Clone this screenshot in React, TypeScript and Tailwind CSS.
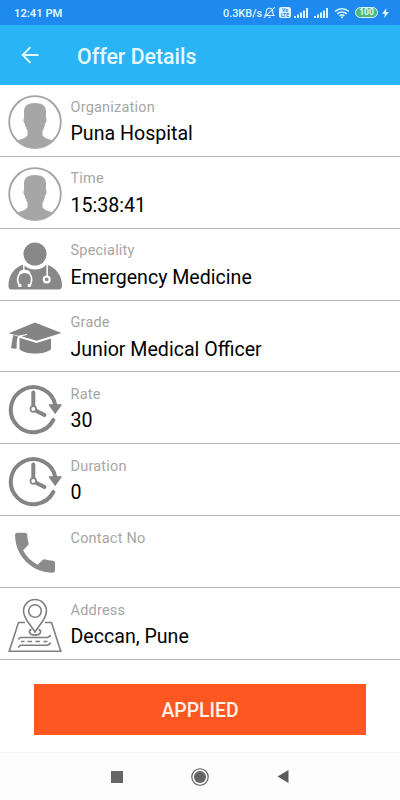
import React from 'react';

const AvatarIcon: React.FC = () => (
    <svg className="w-[54px] h-[54px]" viewBox="0 0 54 54" fill="none">
        <circle cx="27" cy="27" r="25.800" stroke="#a2a2a2" strokeWidth="1.800"/>
        <path
            d="M27 8c7.500 0 11.300 2.800 11 9.500l-.1 5.500c1.100.8.800 4.300-.8 5.800-.6 3.700-1.600 5.600-2.600 6.800v4.200c1.200 3.500 6.600 4.300 11 6.200A26 26 0 0 1 27 53.500 26 26 0 0 1 8.500 46c4.400-1.900 9.800-2.700 11-6.200v-4.200c-1-1.200-2-3.100-2.600-6.800-1.600-1.500-1.900-5-.8-5.800L16 17.500C15.700 10.800 19.500 8 27 8Z"
            fill="#a6a6a6"
        />
    </svg>
);

const DoctorIcon: React.FC = () => (
    <svg className="w-[54px] h-[54px]" viewBox="0 0 54 54" fill="none">
        <circle cx="27" cy="15" r="11.500" fill="#888"/>
        <path
            d="M15.500 25.500c3 3.300 7 5 11.500 5s8.500-1.700 11.500-5C47.500 28 54 36.500 54 46.500c0 2.800-1 4-3.500 4h-47C1 50.500 .5 49.300 .5 46.500 .5 36.500 6.500 28 15.500 25.500Z"
            fill="#888"
        />
        <g stroke="#fff" strokeWidth="1.500">
            <path d="M15.800 24v8M39.200 24v13"/>
            <circle cx="38.700" cy="40.400" r="2.900" strokeWidth="2.200"/>
            <path d="M12.500 46.500h-1.300c-2-4-2-8.500.3-11.500 2.200-2.600 8.100-2.600 10.300 0 2.300 3 2.300 7.500.3 11.500h-1.300" strokeWidth="1.700"/>
            <path d="M12 34.200c1-3 8.300-3 9.300 0" strokeWidth="2.400"/>
            <path d="M10.600 46.500h2.800M19.800 46.500h2.800" strokeWidth="3.200"/>
        </g>
    </svg>
);

const GraduationIcon: React.FC = () => (
    <svg className="w-[54px] h-[54px]" viewBox="0 0 54 54" fill="#848484">
        <path d="M27 11.500 53.500 22 28.500 29.800 13.500 25.200 19 23.900l-.3-.8-8.300 1.700L.8 22.200Z"/>
        <path d="M11.500 26.700 28.500 31.900 43 27.500v10.800c-5.500 5.700-26 5.700-31.500 0Z"/>
        <path d="M5.300 24 10 25.500C8.300 29 8.900 33.500 8.600 37.600c-2 .4-3.800 0-5.600-.6C3.800 32.500 4.300 28 5.300 24Z"/>
    </svg>
);

const ClockIcon: React.FC = () => (
    <svg className="w-[54px] h-[54px]" viewBox="0 0 54 54" fill="none">
        <g stroke="#848484" strokeWidth="4" strokeLinecap="round">
            <path d="M47.500 24A22.500 22.500 0 1 0 45.300 38"/>
            <path d="M25.300 10.500v14M28 28.700l8.400 4.400"/>
        </g>
        <path d="M41.300 22.800h11.800l-5.900 8.400Z" fill="#848484" stroke="#848484" strokeWidth="1.200" strokeLinejoin="round"/>
        <circle cx="25.300" cy="27" r="2.800" fill="#fff" stroke="#848484" strokeWidth="1.700"/>
    </svg>
);

const PhoneIcon: React.FC = () => (
    <svg className="w-[54px] h-[54px]" viewBox="0 0 54 54" fill="#8b8b8b">
        <path
            transform="translate(.4 .2) scale(2.220)"
            d="M6.620 10.790c1.440 2.830 3.760 5.140 6.590 6.590l2.200-2.200c.27-.27.67-.36 1.020-.24 1.120.37 2.330.57 3.570.57.55 0 1 .45 1 1V20c0 .55-.45 1-1 1-9.390 0-17-7.610-17-17 0-.55.45-1 1-1h3.500c.55 0 1 .45 1 1 0 1.250.2 2.450.57 3.570.11.35.03.74-.25 1.020l-2.200 2.200z"
        />
    </svg>
);

const MapIcon: React.FC = () => (
    <svg className="w-[54px] h-[54px]" viewBox="0 0 54 54" fill="none" stroke="#7f7f7f" strokeWidth="1.600">
        <path d="M17 24.500h-6.500L1.200 53.200h51.600L43.500 24.500H37"/>
        <path d="M23.500 31.200c-3.300 1.300-3 5.900 3.500 5.900s6.800-4.600 3.500-5.900"/>
        <path
            d="M27 34C23.500 28 15.500 21 15.500 13a11.500 11.500 0 0 1 23 0c0 8-8 15-11.500 21Z"
            fill="#fff"
        />
        <circle cx="27" cy="13" r="6.300"/>
        <path d="M10.300 41.300l2-1.800h27.500l3-2.200M10.300 49.600l2-2.400h27.500l3-2.400"/>
        <path d="M13 43.500h3.500M19.500 43.500H24M27.500 43.500H32M35.500 43.500h4"/>
    </svg>
);

const details = [
    { label: 'Organization', value: 'Puna Hospital', Icon: AvatarIcon },
    { label: 'Time', value: '15:38:41', Icon: AvatarIcon },
    { label: 'Speciality', value: 'Emergency Medicine', Icon: DoctorIcon },
    { label: 'Grade', value: 'Junior Medical Officer', Icon: GraduationIcon },
    { label: 'Rate', value: '30', Icon: ClockIcon },
    { label: 'Duration', value: '0', Icon: ClockIcon },
    { label: 'Contact No', value: '', Icon: PhoneIcon },
    { label: 'Address', value: 'Deccan, Pune', Icon: MapIcon },
];

const SignalIcon: React.FC = () => (
    <svg className="w-[15px] h-[12px]" viewBox="0 0 15 12" fill="#d9f3ff">
        <path d="M0 9h2v2H0zM3 7.500h2V11H3zM6 5.500h2V11H6zM9 3.500h2V11H9zM12 1h2v10h-2z"/>
    </svg>
);

const StatusBar: React.FC = () => (
    <div className="h-[25px] bg-[#1e8af0] flex items-center pl-[14px] pr-[11px] text-[#e2f6ff]">
        <span className="text-[11.200px] font-semibold flex-1 pt-[3px]">12:41 PM</span>
        <span className="text-[10.900px] font-medium pt-[3px]">0.3KB/s</span>
        {/* Muted bell */}
        <svg className="w-[13px] h-[13px] ml-[1px]" viewBox="0 0 13 13" fill="none" stroke="#d9f3ff" strokeWidth="1.100">
            <path d="M2 9.500h9L9.800 7.700V5.500a3.300 3.300 0 0 0-6.600 0v2.200ZM5.300 11.300h2.400M.8 11.800 12 1.200"/>
        </svg>
        <span className="ml-[3px] w-[12px] h-[11px] rounded-[2px] bg-[#dff5ff] text-[#1e8af0] text-[5px] leading-[5px] font-bold flex flex-col items-center justify-center">
            <span>Vo</span>
            <span>LTE</span>
        </span>
        <div className="ml-[3px] flex gap-[5px]">
            <SignalIcon/>
            <SignalIcon/>
        </div>
        <svg className="w-[16px] h-[12px] ml-[5px]" viewBox="0 0 16 12" fill="none" stroke="#d9f3ff" strokeWidth="1.500">
            <path d="M1 4.500a10 10 0 0 1 14 0M3.300 6.900a6.700 6.700 0 0 1 9.400 0M5.600 9a3.500 3.500 0 0 1 4.800 0"/>
            <path d="M8 9.600v1.600" strokeWidth="2"/>
        </svg>
        <span className="ml-[5px] w-[23px] h-[11px] rounded-full border border-[#d9f3ff] bg-[#50b878] text-[8.500px] leading-[9px] font-bold text-center">100</span>
        <svg className="w-[7px] h-[10px] ml-[4px]" viewBox="0 0 7 10" fill="#e2f6ff">
            <path d="M4.500 0 0 5.700h2.800L2.200 10 7 4H4Z"/>
        </svg>
    </div>
);

const App: React.FC = () => {
    return (
        <div className="w-full h-screen overflow-hidden bg-white flex flex-col font-[Roboto,sans-serif]">
            <StatusBar/>

            <header className="h-[60px] bg-[#29b4f6] flex items-center pl-[21px]">
                <button aria-label="Back">
                    <svg className="w-[18px] h-[18px]" viewBox="0 0 18 18" fill="none" stroke="#e6f9ff" strokeWidth="1.900">
                        <path d="M17.500 9H2M9.500 1.200 1.700 9l7.800 7.800"/>
                    </svg>
                </button>
                <h1 className="ml-[38px] pt-[3px] text-[21.300px] font-medium text-[#e6f9ff]">Offer Details</h1>
            </header>

            <main className="flex-1">
                {details.map(({ label, value, Icon }) => (
                    <div key={label} className="h-[71.860px] border-b border-[#b4b4b4] flex pt-[10px] pl-[8px]">
                        <Icon/>
                        <div className="ml-[8.500px] pt-[1.500px]">
                            <p className="text-[14.500px] leading-[22px] tracking-[0.200px] text-[#a6a6a6]">{label}</p>
                            <p className="mt-[2.500px] text-[19.600px] leading-[26px] text-black">{value}</p>
                        </div>
                    </div>
                ))}

                <div className="px-[34px] pt-[24px]">
                    <button className="w-full h-[51px] pt-[2px] bg-[#ff5722] text-[#fff3e6] text-[19.400px] font-medium">APPLIED</button>
                </div>
            </main>

            {/* System navigation */}
            <nav className="h-[48px] bg-[#fdfdfd] border-t border-[#f6f6f6] flex items-center justify-center gap-[68px]">
                <span className="w-[12px] h-[12px] bg-[#666]"/>
                <svg className="w-[18px] h-[18px]" viewBox="0 0 18 18">
                    <circle cx="9" cy="9" r="8.200" fill="none" stroke="#555" strokeWidth="1.100"/>
                    <circle cx="9" cy="9" r="6" fill="#666"/>
                </svg>
                <svg className="w-[12px] h-[13px]" viewBox="0 0 12 13" fill="#5a5a5a">
                    <path d="M11.500 0v13L.5 6.500Z"/>
                </svg>
            </nav>
        </div>
    );
};

export default App;
